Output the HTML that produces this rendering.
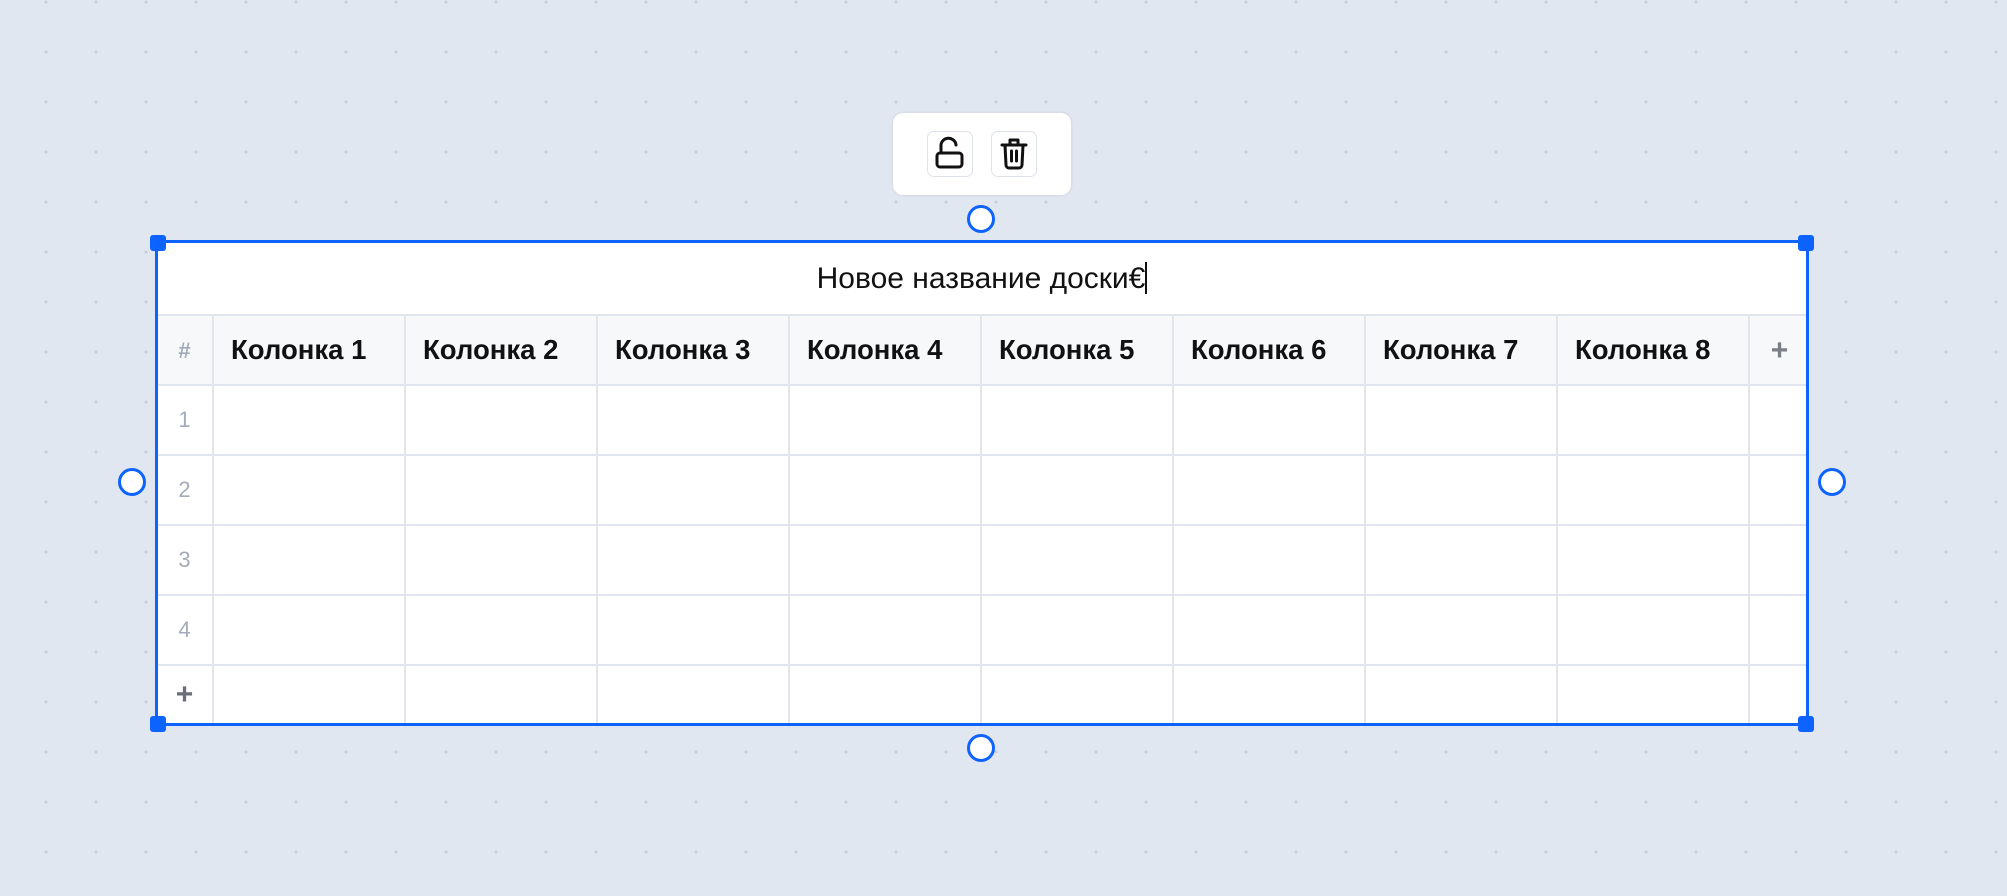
<!DOCTYPE html>
<html><head><meta charset="utf-8"><style>
*{margin:0;padding:0;box-sizing:border-box}
body{width:2007px;height:896px;overflow:hidden;background:#e1e7f0;background-image:radial-gradient(circle,#c8cdd8 1.3px,transparent 1.8px);background-size:50px 50px;background-position:21px -23px;font-family:"Liberation Sans",sans-serif;position:relative}
.a{position:absolute}
.tb{left:893px;top:113px;width:178px;height:82px;background:#fff;border-radius:10px;box-shadow:0 0 0 1.5px #d8dde6}
.btn{top:18px;width:46px;height:46px;border:1.5px solid #dde2ea;border-radius:7px;background:#fff}
.tbl{left:156px;top:242px;width:1651px;height:482px;background:#fff;border-radius:16px;overflow:hidden}
.hl{background:#e0e5ee;height:2px;left:0;width:100%}
.vl{background:#e0e5ee;width:2px}
.hd{font-weight:bold;font-size:27.5px;color:#111;top:92px}
.n{font-size:22px;color:#a4abb9;width:57px;text-align:center}
.frame{left:155px;top:240px;width:1654px;height:486px;border:3px solid #0d63ff}
.sq{width:16px;height:16px;background:#0d63ff;border-radius:3px}
.c{width:28px;height:28px;border:3.5px solid #0d63ff;border-radius:50%;background:#fff}
</style></head><body>
<div class="a tb">
 <div class="a btn" style="left:34px">
  <svg class="a" style="left:-1.5px;top:-1.5px" width="46" height="46" viewBox="0 0 46 46" fill="none" stroke="#111" stroke-width="3" stroke-linecap="round" stroke-linejoin="round"><rect x="10" y="22" width="25" height="14" rx="3"/><path d="M14 22V15.5a7.5 7.5 0 0 1 15 -1.5"/></svg>
 </div>
 <div class="a btn" style="left:98px">
  <svg class="a" style="left:-1.5px;top:-1.5px" width="46" height="46" viewBox="0 0 46 46" fill="none" stroke="#111" stroke-width="3" stroke-linecap="round" stroke-linejoin="round"><path d="M11 14h24M19 14V9h8v5M14 14l1 20a3 3 0 0 0 3 3h10a3 3 0 0 0 3-3l1-20M20.5 20v10M25.5 20v10"/></svg>
 </div>
</div>
<div class="a tbl">
 <div class="a" style="left:0;top:0;width:100%;height:73px;text-align:center;font-size:30px;line-height:73px;color:#111;padding-left:1px">Новое название доски€<span style="display:inline-block;width:2px;height:32px;background:#111;vertical-align:middle;margin-top:-4px"></span></div>
 <div class="a" style="left:0;top:73px;width:100%;height:70px;background:#f6f8fa"></div>
 <div class="a hl" style="top:72px"></div>
 <div class="a hl" style="top:142px"></div>
 <div class="a hl" style="top:212px"></div>
 <div class="a hl" style="top:282px"></div>
 <div class="a hl" style="top:352px"></div>
 <div class="a hl" style="top:422px"></div>
 <div class="a vl" style="left:56px;top:73px;height:420px"></div>
 <div class="a vl" style="left:248px;top:73px;height:420px"></div>
 <div class="a vl" style="left:440px;top:73px;height:420px"></div>
 <div class="a vl" style="left:632px;top:73px;height:420px"></div>
 <div class="a vl" style="left:824px;top:73px;height:420px"></div>
 <div class="a vl" style="left:1016px;top:73px;height:420px"></div>
 <div class="a vl" style="left:1208px;top:73px;height:420px"></div>
 <div class="a vl" style="left:1400px;top:73px;height:420px"></div>
 <div class="a vl" style="left:1592px;top:73px;height:420px"></div>
 <div class="a n" style="left:0;top:96px;font-weight:bold">#</div>
 <div class="a hd" style="left:75px">Колонка 1</div>
 <div class="a hd" style="left:267px">Колонка 2</div>
 <div class="a hd" style="left:459px">Колонка 3</div>
 <div class="a hd" style="left:651px">Колонка 4</div>
 <div class="a hd" style="left:843px">Колонка 5</div>
 <div class="a hd" style="left:1035px">Колонка 6</div>
 <div class="a hd" style="left:1227px">Колонка 7</div>
 <div class="a hd" style="left:1419px">Колонка 8</div>
 <div class="a n" style="left:1595px;top:92px;font-size:30px;font-weight:bold;color:#7a7f88">+</div>
 <div class="a n" style="top:165px">1</div>
 <div class="a n" style="top:235px">2</div>
 <div class="a n" style="top:305px">3</div>
 <div class="a n" style="top:375px">4</div>
 <div class="a n" style="top:436px;font-size:30px;font-weight:bold;color:#6a6e76">+</div>
</div>
<div class="a frame"></div>
<div class="a sq" style="left:150px;top:235px"></div>
<div class="a sq" style="left:1798px;top:235px"></div>
<div class="a sq" style="left:150px;top:716px"></div>
<div class="a sq" style="left:1798px;top:716px"></div>
<div class="a c" style="left:967px;top:205px"></div>
<div class="a c" style="left:967px;top:734px"></div>
<div class="a c" style="left:118px;top:468px"></div>
<div class="a c" style="left:1818px;top:468px"></div>
</body></html>
